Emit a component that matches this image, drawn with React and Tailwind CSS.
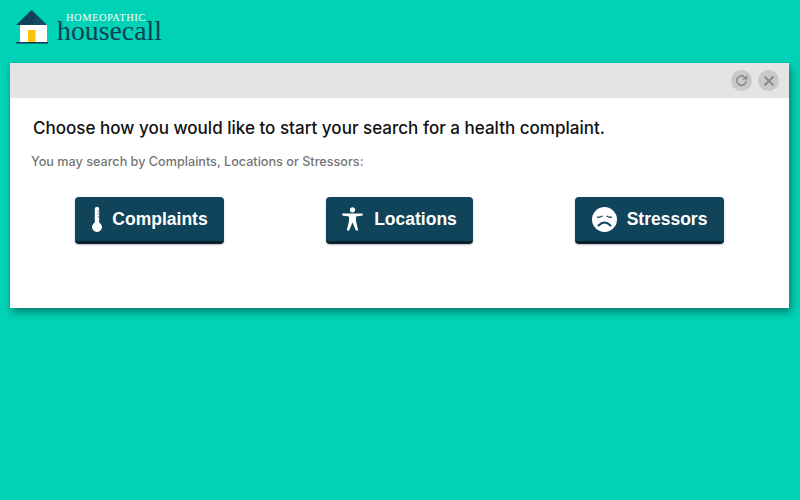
import React from "react";

function Logo() {
  return (
    <div className="flex items-start h-[63px] pl-[15px] pt-[9px]">
      <svg width="35" height="35" viewBox="0 0 35 35" className="shrink-0">
        <rect x="5" y="15" width="27" height="19" fill="#fff" />
        <rect x="13" y="21" width="7.5" height="12" fill="#ffc20e" />
        <path d="M1 16 L16.5 1 L32 16 Z" fill="#0f4257" />
        <path d="M16.5 1 L20 8 L17 16 L32 16 Z" fill="#164c63" />
        <rect x="1" y="33" width="32" height="1.6" fill="#0f3f55" />
      </svg>
      <div className="relative ml-[7px] h-[36px] w-[110px] font-['Liberation_Serif',serif]">
        <div className="absolute left-[9px] top-[5px] text-[10.5px] leading-[8px] tracking-[0.5px] text-white whitespace-nowrap">HOMEOPATHIC</div>
        <div className="absolute left-0 top-[13px] text-[27.8px] leading-[18px] text-[#0f3f55] whitespace-nowrap">housecall</div>
      </div>
    </div>
  );
}

function Btn({ w, gap, icon, label }) {
  return (
    <button className={`${w} h-[47px] mx-auto flex items-center justify-center ${gap} rounded-[4px] bg-[#0f445a] border-b-[3px] border-[#06222e] text-white font-['Liberation_Sans',sans-serif] font-bold text-[17.5px] shadow-[0_1px_2px_rgba(0,0,0,0.25)]`}>
      {icon}
      <span className="pt-[1px]">{label}</span>
    </button>
  );
}

const Thermo = (
  <svg width="12" height="27" viewBox="0 0 12 27" fill="#fff">
    <path d="M3.8 3 a2.2 2.2 0 0 1 4.4 0 V16.5 a5 5 0 1 1 -4.4 0 Z" />
    <path d="M6.6 5h1.6M6.6 8h1.6M6.6 11h1.6" stroke="#0f445a" strokeWidth="0.7" />
  </svg>
);
const Person = (
  <svg width="21" height="24" viewBox="0 0 21 24" fill="#fff">
    <circle cx="10.5" cy="2.8" r="2.6" />
    <path d="M0.3 6.5 H20.7 V8.6 L14 9.6 V14 L16.2 23.5 H13.9 L10.5 15.5 L7.1 23.5 H4.8 L7 14 V9.6 L0.3 8.6 Z" />
  </svg>
);
const Sad = (
  <svg width="25" height="25" viewBox="0 0 25 25">
    <circle cx="12.5" cy="12.5" r="12.5" fill="#fff" />
    <path d="M5.5 10.2 Q8 10.5 10 9.2 M19.5 10.2 Q17 10.5 15 9.2" stroke="#0f445a" strokeWidth="1.3" fill="none" strokeLinecap="round" />
    <path d="M6.5 18.5 Q12.5 12.5 18.5 18.5" stroke="#0f445a" strokeWidth="2" fill="none" strokeLinecap="round" />
  </svg>
);

export default function App() {
  return (
    <div className="min-h-[500px] bg-[#00d2b5] font-['Inter',sans-serif]">
      <Logo />
      <div className="ml-[10px] mr-[11px] h-[245px] bg-white shadow-[2px_4px_8px_rgba(0,0,0,0.4)]">
        <div className="h-[35px] bg-[#e4e4e4] flex items-center justify-end gap-[6px] pr-[10px]">
          <div className="w-[21px] h-[21px] rounded-full bg-[#c9c9c9] flex items-center justify-center">
            <svg width="13" height="13" viewBox="0 0 13 13" fill="none" stroke="#8c8c8c" strokeWidth="1.7">
              <path d="M11.2 7 A4.7 4.7 0 1 1 9.4 2.9" />
              <path d="M7 5.4 H12.4 V0.8 Z" fill="#8c8c8c" stroke="none" />
            </svg>
          </div>
          <div className="w-[21px] h-[21px] rounded-full bg-[#c9c9c9] flex items-center justify-center">
            <svg width="12" height="12" viewBox="0 0 12 12" fill="none" stroke="#8c8c8c" strokeWidth="2">
              <path d="M1.5 1.5 L10.5 10.5 M10.5 1.5 L1.5 10.5" />
            </svg>
          </div>
        </div>
        <div className="pl-[23px] pt-[19px] text-[17.05px] leading-[22px] font-medium text-[#111] whitespace-nowrap">
          Choose how you would like to start your search for a health complaint.
        </div>
        <div className="pl-[21px] pt-[14px] text-[12.65px] leading-[18px] font-medium text-[#757575] whitespace-nowrap">
          You may search by Complaints, Locations or Stressors:
        </div>
        <div className="w-[750px] mx-auto mt-[26px] grid grid-cols-3">
          <Btn w="w-[149px]" gap="gap-[9px]" icon={Thermo} label="Complaints" />
          <Btn w="w-[147px]" gap="gap-[11px]" icon={Person} label="Locations" />
          <Btn w="w-[149px]" gap="gap-[10px]" icon={Sad} label="Stressors" />
        </div>
      </div>
    </div>
  );
}
